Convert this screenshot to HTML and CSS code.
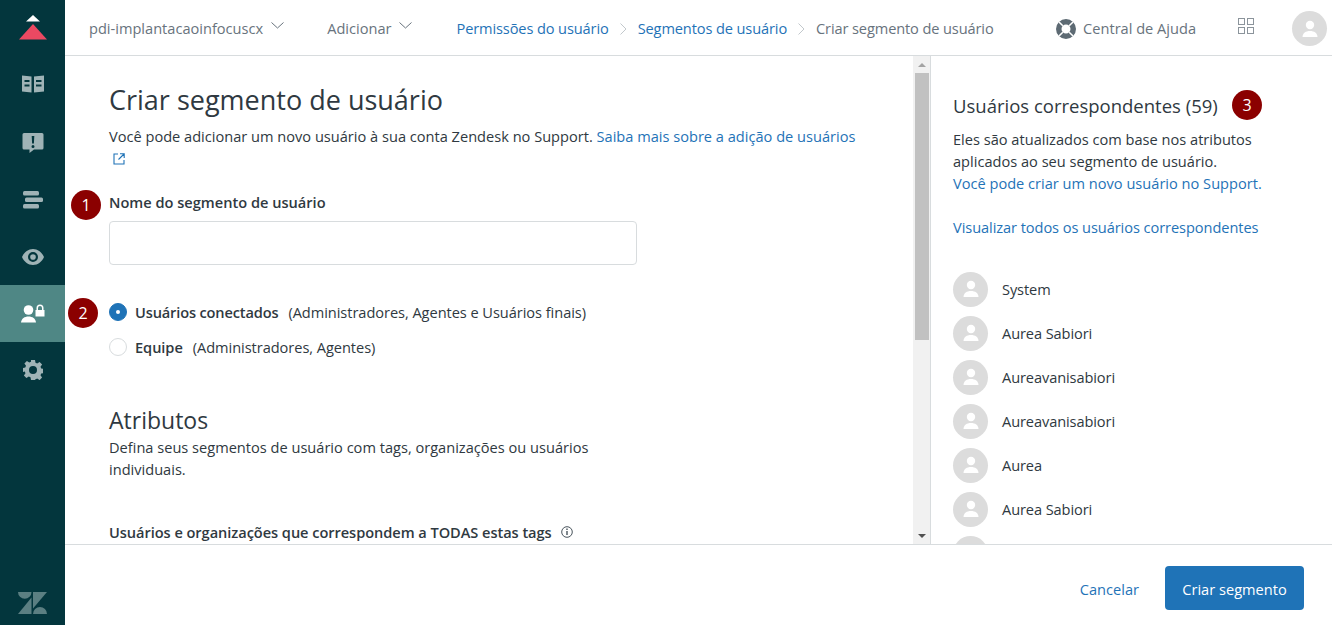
FILE: index.html
```html
<!DOCTYPE html>
<html lang="pt">
<head>
<meta charset="utf-8">
<title>Criar segmento de usuário</title>
<link rel="stylesheet" href="styles.css">
</head>
<body>
<div class="app">
  <nav class="sidebar">
    <div class="logo">
      <svg width="30" height="26" viewBox="0 0 30 26"><path fill="#fff" d="M15 0l7 6.500H8z"/><path fill="#eb4962" d="M15 9l14 15.500H1z"/></svg>
    </div>
    <a class="nav-item nav-book">
      <svg width="24" height="20" viewBox="0 0 24 20"><path fill="#9fb3b6" fill-rule="evenodd" d="M1 1.500l9.500 1v16L1 17.500zM13 2.500l10-1v16l-10 1zM3.500 6v2h5V6zM3.500 10.500v2h5v-2zM15 6v2h5.500V6zM15 10.500v2h5.500v-2z"/></svg>
    </a>
    <a class="nav-item">
      <svg width="22" height="20" viewBox="0 0 22 20"><path fill="#9fb3b6" fill-rule="evenodd" d="M2 0h18a1.500 1.500 0 0 1 1.500 1.500v13.500a1.500 1.500 0 0 1-1.500 1.500H12L7.500 20v-3.500H2A1.500 1.500 0 0 1 .5 15V1.500A1.500 1.500 0 0 1 2 0zM9.700 3l.4 7.500h1.800l.4-7.500zM11 12a1.500 1.500 0 1 0 0 3 1.500 1.500 0 0 0 0-3z"/></svg>
    </a>
    <a class="nav-item">
      <svg width="22" height="18" viewBox="0 0 22 18"><g fill="#9fb3b6"><rect x="1" y="0" width="16" height="4.500" rx="1.500"/><rect x="3" y="6.500" width="18" height="4.500" rx="1.500"/><rect x="1" y="13" width="16" height="4.500" rx="1.500"/></g></svg>
    </a>
    <a class="nav-item">
      <svg width="22" height="16" viewBox="0 0 22 16"><path fill="#9fb3b6" fill-rule="evenodd" d="M11 0c5 0 9 3.500 11 8-2 4.500-6 8-11 8S2 12.500 0 8c2-4.500 6-8 11-8zm0 3a5 5 0 1 0 0 10 5 5 0 0 0 0-10zm0 2.200a2.800 2.800 0 1 1 0 5.600 2.800 2.800 0 0 1 0-5.600z"/></svg>
    </a>
    <a class="nav-item nav-active">
      <svg width="24" height="20" viewBox="0 0 24 20"><g fill="#fff"><circle cx="7.500" cy="6" r="4.800"/><path d="M0 18.500c.5-4 3.500-6 7.500-6s7 2 7.500 6z"/><path fill-rule="evenodd" d="M15.500 6V4a3.500 3.500 0 0 1 7 0v2H23.500v6.500h-9V6zm1.500 0h4V4a2 2 0 0 0-4 0z"/></g></svg>
    </a>
    <a class="nav-item nav-gear">
      <svg width="20" height="20" viewBox="0 0 20 20"><path fill="#9fb3b6" fill-rule="evenodd" d="M8 0h4l.5 2.800 1.700.7 2.400-1.600 2.500 2.500-1.600 2.400.7 1.700 2.800.5v4l-2.800.5-.7 1.700 1.600 2.400-2.500 2.500-2.400-1.600-1.700.7L12 20H8l-.5-2.800-1.700-.7-2.400 1.600-2.500-2.500 1.600-2.400-.7-1.700L-.5 12V8l2.800-.5.7-1.700L1.400 3.400 3.900.9l2.400 1.600 1.700-.7zM10 6a4 4 0 1 0 0 8 4 4 0 0 0 0-8z"/></svg>
    </a>
    <div class="zd-logo">
      <svg width="29" height="22" viewBox="0 0 29 22"><g fill="#5b7f82"><path d="M15 0h14L15 16.500z"/><path d="M13.500 5.500V22H0z"/><path d="M15 22a7 7 0 0 1 14 0z"/><path d="M0 0a6.750 6.750 0 0 0 13.500 0z"/></g></svg>
    </div>
  </nav>

  <div class="main">
    <header class="topbar">
      <span class="menu">pdi-implantacaoinfocuscx<svg class="chev" width="13" height="7" viewBox="0 0 13 7"><path d="M.5.500l6 5.500 6-5.500" fill="none" stroke="#68737d"/></svg></span>
      <span class="menu menu-add">Adicionar<svg class="chev" width="13" height="7" viewBox="0 0 13 7"><path d="M.5.500l6 5.500 6-5.500" fill="none" stroke="#68737d"/></svg></span>
      <div class="crumbs">
        <a class="link">Permissões do usuário</a>
        <svg class="sep" width="7" height="12" viewBox="0 0 7 12"><path d="M.5.500l5.500 5.500-5.500 5.500" fill="none" stroke="#c2c8cc"/></svg>
        <a class="link">Segmentos de usuário</a>
        <svg class="sep" width="7" height="12" viewBox="0 0 7 12"><path d="M.5.500l5.500 5.500-5.500 5.500" fill="none" stroke="#c2c8cc"/></svg>
        <span class="crumb-current">Criar segmento de usuário</span>
      </div>
      <div class="top-right">
        <svg class="help-icon" width="20" height="20" viewBox="0 0 20 20"><path fill="#5d6a73" fill-rule="evenodd" d="M10 0a10 10 0 1 1 0 20 10 10 0 0 1 0-20zm0 5.500a4.500 4.500 0 1 0 0 9 4.500 4.500 0 0 0 0-9z"/><path stroke="#fff" stroke-width="1.500" d="M3 3l3.800 3.800M17 3l-3.800 3.800M3 17l3.800-3.800M17 17l-3.800-3.800"/></svg>
        <span class="help-text">Central de Ajuda</span>
        <svg class="grid-icon" width="16" height="16" viewBox="0 0 16 16"><g fill="none" stroke="#8b949b"><rect x=".5" y=".5" width="6" height="6"/><rect x="9.500" y=".5" width="6" height="6"/><rect x=".5" y="9.500" width="6" height="6"/><rect x="9.500" y="9.500" width="6" height="6"/></g></svg>
        <span class="avatar avatar-top"><svg width="20" height="20" viewBox="0 0 20 20"><use href="#person"/></svg></span>
      </div>
    </header>

    <div class="body">
      <section class="pane">
        <div class="content">
          <h1 class="title">Criar segmento de usuário</h1>
          <p class="intro">Você pode adicionar um novo usuário à sua conta Zendesk no Support. <a class="link">Saiba mais sobre a adição de usuários</a><br><svg class="ext" width="12" height="12" viewBox="0 0 12 12"><path d="M5 1H1v10h10V7M7 .8h4.200V5M11 1L5.500 6.500" fill="none" stroke="#1f73b7" stroke-width="1.100"/></svg></p>
          <div class="field">
            <label class="label">Nome do segmento de usuário<span class="marker marker-1">1</span></label>
            <input class="input" type="text">
          </div>
          <div class="radios">
            <div class="radio-row"><span class="radio radio-on"></span><b class="strong strong-tight">Usuários conectados</b><span class="hint">(Administradores, Agentes e Usuários finais)</span><span class="marker marker-2">2</span></div>
            <div class="radio-row"><span class="radio"></span><b class="strong">Equipe</b><span class="hint">(Administradores, Agentes)</span></div>
          </div>
          <h2 class="attr-title">Atributos</h2>
          <p class="attr-text">Defina seus segmentos de usuário com tags, organizações ou usuários individuais.</p>
          <div class="tags-label"><b class="strong">Usuários e organizações que correspondem a TODAS estas tags</b><svg class="info" width="12" height="12" viewBox="0 0 12 12"><circle cx="6" cy="6" r="5.300" fill="none" stroke="#49545c"/><path stroke="#49545c" stroke-width="1.400" d="M6 5v4M6 2.600v1.400"/></svg></div>
        </div>
        <div class="scrollbar">
          <span class="arrow arrow-up"></span>
          <span class="thumb"></span>
          <span class="arrow arrow-down"></span>
        </div>
      </section>
      <aside class="panel">
        <h3 class="panel-title">Usuários correspondentes (59)<span class="marker marker-3">3</span></h3>
        <p class="panel-text">Eles são atualizados com base nos atributos aplicados ao seu segmento de usuário.<br><a class="link">Você pode criar um novo usuário no Support.</a></p>
        <a class="link all-link">Visualizar todos os usuários correspondentes</a>
        <ul class="users">
          <li class="user"><span class="avatar"><svg width="20" height="20" viewBox="0 0 20 20"><use href="#person"/></svg></span>System</li>
          <li class="user"><span class="avatar"><svg width="20" height="20" viewBox="0 0 20 20"><use href="#person"/></svg></span>Aurea Sabiori</li>
          <li class="user"><span class="avatar"><svg width="20" height="20" viewBox="0 0 20 20"><use href="#person"/></svg></span>Aureavanisabiori</li>
          <li class="user"><span class="avatar"><svg width="20" height="20" viewBox="0 0 20 20"><use href="#person"/></svg></span>Aureavanisabiori</li>
          <li class="user"><span class="avatar"><svg width="20" height="20" viewBox="0 0 20 20"><use href="#person"/></svg></span>Aurea</li>
          <li class="user"><span class="avatar"><svg width="20" height="20" viewBox="0 0 20 20"><use href="#person"/></svg></span>Aurea Sabiori</li>
          <li class="user"><span class="avatar"><svg width="20" height="20" viewBox="0 0 20 20"><use href="#person"/></svg></span></li>
        </ul>
      </aside>
    </div>

    <footer class="footer">
      <a class="link cancel">Cancelar</a>
      <button class="primary" type="button">Criar segmento</button>
    </footer>
  </div>
</div>
<svg class="defs" width="0" height="0"><defs><g id="person"><circle cx="10" cy="6" r="4.200" fill="#fff"/><path d="M2.500 18c.2-4 3.200-6 7.500-6s7.300 2 7.500 6z" fill="#fff"/></g></defs></svg>
</body>
</html>
```
FILE: styles.css
```css
* { box-sizing: border-box; }
html, body { margin: 0; height: 100%; overflow: hidden; }
body { font-family: "Open Sans", "Noto Sans", sans-serif; font-size: 14.6px; color: #2f3941; background: #fff; }
.defs { position: absolute; }
.app { display: flex; height: 625px; }
.sidebar { width: 65px; flex: none; background: #03363d; display: flex; flex-direction: column; }
.logo { height: 57px; display: flex; justify-content: center; padding-top: 15px; }
.nav-item { height: 57px; display: flex; align-items: center; justify-content: center; }
.nav-book { padding-bottom: 3px; }
.nav-gear { padding-bottom: 2px; }
.nav-active { background: #4f8785; }
.zd-logo { margin-top: auto; height: 33px; display: flex; justify-content: center; }
.main { flex: 1; min-width: 0; display: flex; flex-direction: column; }
.topbar { height: 56px; flex: none; border-bottom: 1px solid #d8dcde; display: flex; align-items: center; padding: 2px 5px 0 24px; color: #68737d; }
.menu { display: inline-flex; align-items: center; margin-top: -2px; }
.chev { margin: -4px 0 0 8px; }
.menu-add { margin-left: 43px; }
.crumbs { display: flex; align-items: center; margin: -2px 0 0 44px; letter-spacing: -.12px; }
.sep { margin: 3px 11px 0 11px; }
.link { color: #1f73b7; text-decoration: none; }
.top-right { margin-left: auto; display: flex; align-items: center; }
.help-text { margin: -2px 0 0 7px; }
.grid-icon { margin: -5px 0 0 42px; }
.avatar { width: 35px; height: 35px; border-radius: 50%; background: #dcdcdc; display: inline-flex; align-items: center; justify-content: center; flex: none; }
.avatar-top { margin-left: 38px; }
.body { flex: 1; min-height: 0; display: flex; border-bottom: 1px solid #d8dcde; }
.pane { width: 866px; flex: none; display: flex; border-right: 1px solid #d8dcde; overflow: hidden; }
.content { flex: 1; min-width: 0; padding: 27px 44px 0; overflow: hidden; }
.title { margin: 0; font-size: 27px; line-height: 34px; font-weight: 400; color: #2f3941; }
.intro { margin: 8px 0 0; line-height: 22px; }
.ext { vertical-align: -1px; margin-left: 4px; }
.field { margin-top: 22px; }
.label { display: block; position: relative; font-weight: 600; line-height: 22px; }
.input { display: block; width: 528px; height: 44px; margin-top: 8px; border: 1px solid #d8dcde; border-radius: 4px; background: #fff; }
.radios { margin-top: 29px; }
.radio-row { position: relative; display: flex; align-items: center; height: 35px; }
.radio { width: 18px; height: 18px; border-radius: 50%; border: 1px solid #d8dcde; margin: 1px 8px 0 0; flex: none; }
.radio-on { background: #1f73b7; border-color: #1f73b7; position: relative; }
.radio-on::after { content: ""; position: absolute; left: 6px; top: 6px; width: 4px; height: 4px; border-radius: 50%; background: #fff; }
.strong { font-weight: 600; letter-spacing: -.05px; }
.strong-tight { letter-spacing: -.15px; }
.hint { margin-left: 10px; letter-spacing: -.05px; }
.attr-title { margin: 41px 0 0; font-size: 23px; line-height: 30px; font-weight: 400; }
.attr-text { margin: 1px 0 0; width: 500px; line-height: 22px; }
.tags-label { margin-top: 41px; line-height: 22px; display: flex; align-items: center; }
.info { margin-left: 9px; }
.marker { position: absolute; width: 30px; height: 30px; border-radius: 50%; background: #8b0000; color: #fff; font-size: 16px; font-weight: 400; line-height: 30px; text-align: center; letter-spacing: 0; }
.marker-1 { left: -38px; top: -1px; }
.marker-2 { left: -41px; top: 4px; }
.marker-3 { left: 279px; top: -2px; }
.scrollbar { width: 17px; flex: none; background: #f1f1f1; display: flex; flex-direction: column; align-items: center; position: relative; }
.thumb { width: 14px; height: 267px; background: #c1c1c1; margin-top: 6px; }
.arrow { width: 0; height: 0; border-left: 4px solid transparent; border-right: 4px solid transparent; }
.arrow-up { border-bottom: 4px solid #a3a3a3; margin-top: 7px; }
.arrow-down { border-top: 4px solid #505050; margin-top: auto; margin-bottom: 6px; }
.panel { flex: 1; min-width: 0; padding: 36px 60px 0 22px; overflow: hidden; position: relative; }
.panel-title { position: relative; margin: 0; font-size: 18.5px; line-height: 28px; font-weight: 400; white-space: nowrap; }
.panel-text { margin: 8px 0 0; line-height: 22px; white-space: normal; }
.all-link { display: block; margin-top: 22px; line-height: 22px; white-space: nowrap; letter-spacing: -.07px; }
.users { list-style: none; margin: 29px 0 0; padding: 0; }
.user { height: 44px; display: flex; align-items: center; gap: 14px; letter-spacing: -.1px; }
.footer { height: 80px; flex: none; display: flex; align-items: center; justify-content: flex-end; padding: 6px 28px 0 0; }
.cancel { margin: 2px 26px 0 0; }
.primary { width: 139px; height: 44px; padding-top: 2px; background: #1f73b7; border: 0; border-radius: 4px; color: #fff; font: inherit; }
```
